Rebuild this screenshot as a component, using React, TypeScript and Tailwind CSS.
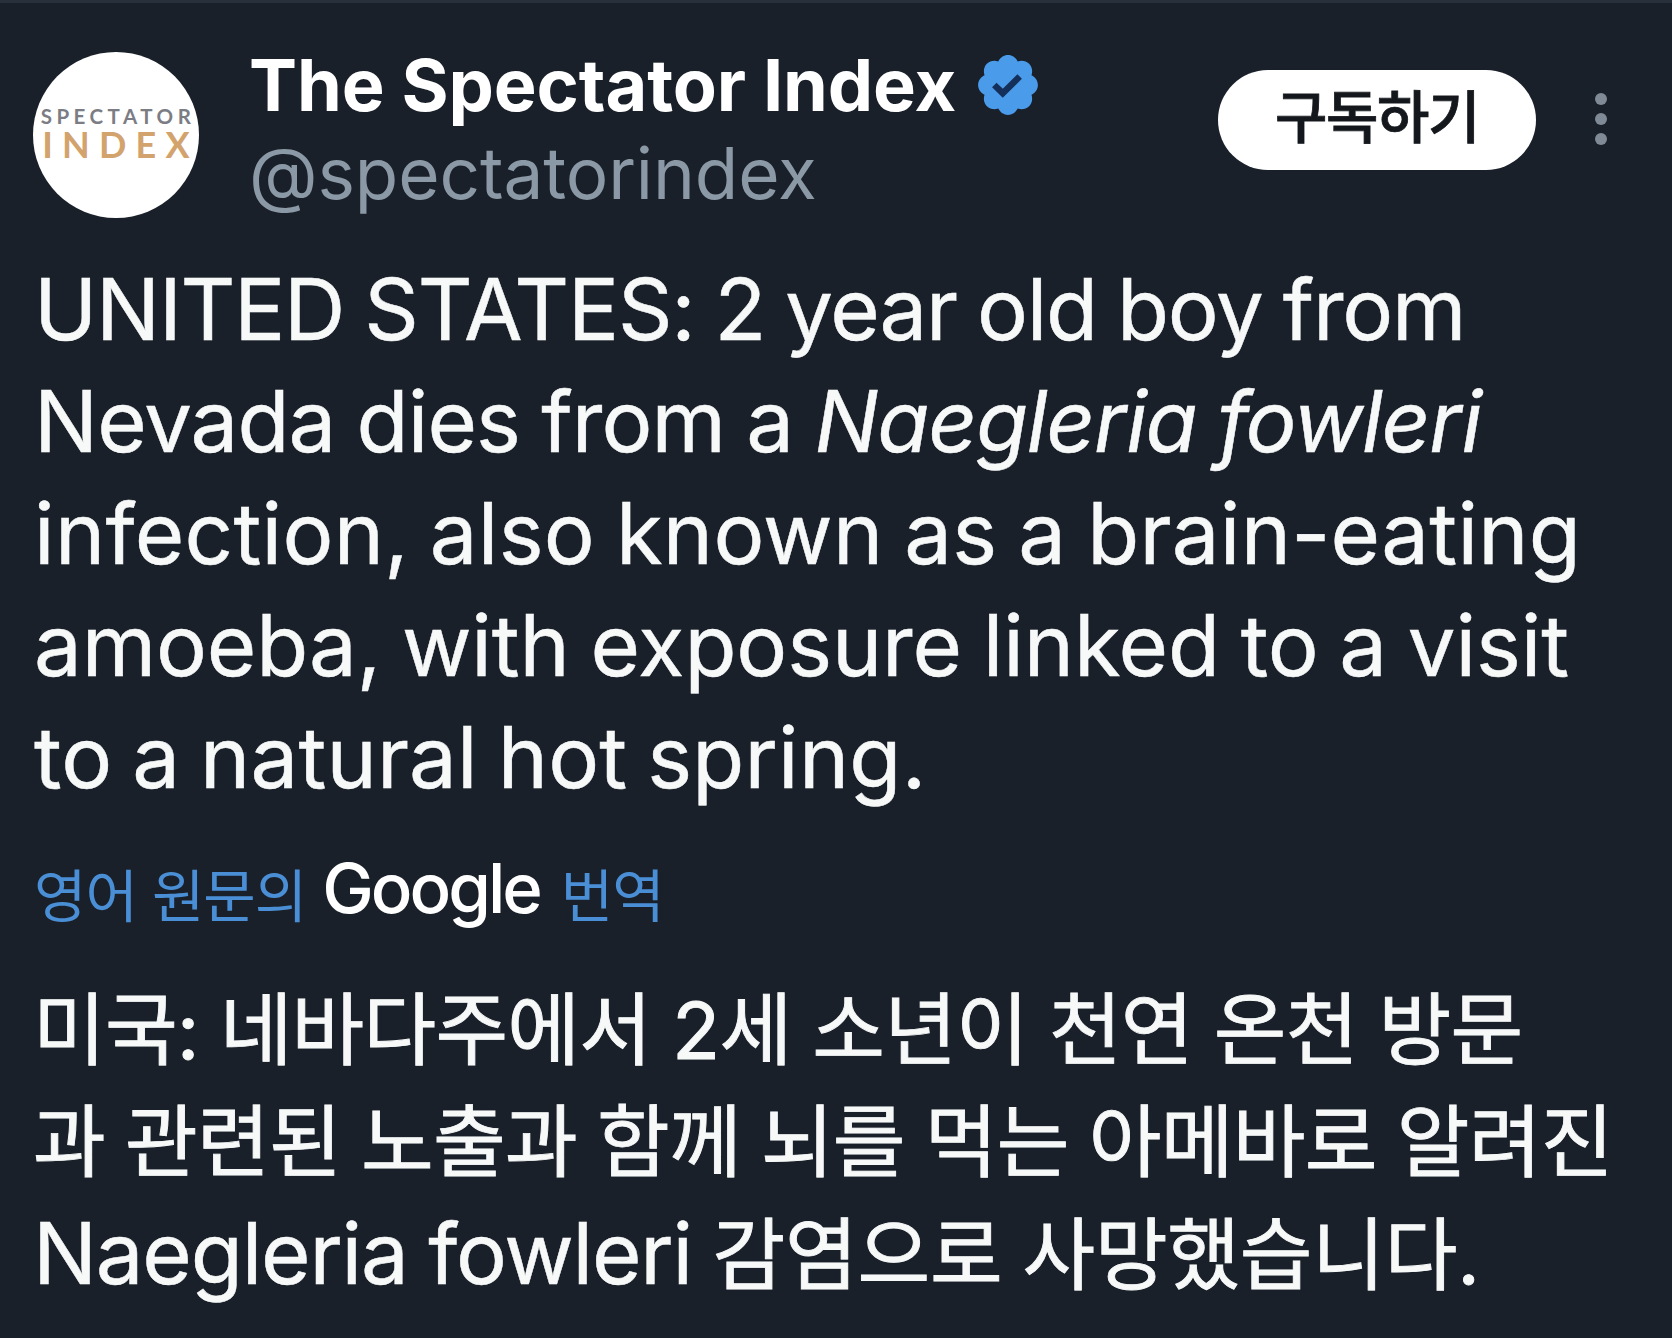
import React from "react";

function Avatar() {
  return (
    <div className="mt-[49px] flex h-[166px] w-[166px] shrink-0 flex-col items-center overflow-hidden rounded-full bg-white pt-[52px] font-['Lato',sans-serif]">
      <span className="-mr-[4px] whitespace-nowrap text-[20.5px] font-bold leading-[24px] tracking-[4.5px] text-[#7c7d84]">
        SPECTATOR
      </span>
      <span className="-mr-[9px] whitespace-nowrap text-[36px] font-bold leading-[33px] tracking-[9.2px] text-[#d3a36d]">
        INDEX
      </span>
    </div>
  );
}

function VerifiedBadge() {
  return (
    <svg viewBox="0 0 24 24" className="h-[70px] w-[70px] shrink-0" aria-hidden="true">
      <path
        fill="#4a9bea"
        d="M22.25 12c0-1.43-.88-2.67-2.19-3.34.46-1.39.2-2.9-.81-3.91s-2.52-1.27-3.91-.81c-.66-1.31-1.91-2.19-3.34-2.19s-2.67.88-3.33 2.19c-1.4-.46-2.91-.2-3.92.81s-1.26 2.52-.8 3.91c-1.31.67-2.2 1.91-2.2 3.34s.89 2.67 2.2 3.34c-.46 1.39-.21 2.9.8 3.91s2.52 1.26 3.91.81c.67 1.31 1.91 2.19 3.34 2.19s2.68-.88 3.34-2.19c1.39.45 2.9.2 3.91-.81s1.27-2.52.81-3.91c1.31-.67 2.19-1.91 2.19-3.34z"
      />
      <path d="M7.3 12 10.2 14.8 16 9.1" fill="none" stroke="#14305a" strokeWidth="2.2" />
    </svg>
  );
}

function Header() {
  return (
    <header className="flex h-[251px] items-start pl-[33px]">
      <Avatar />
      <div className="ml-[50px] flex flex-col pt-[38px]">
        <div className="flex h-[88px] items-center">
          <h1 className="whitespace-nowrap text-[72px] font-bold leading-[88px] tracking-[-0.1px] text-white">
            The Spectator Index
          </h1>
          <span className="ml-[17px]">
            <VerifiedBadge />
          </span>
        </div>
        <p className="mt-[2px] whitespace-nowrap text-[71px] leading-[84px] tracking-[-0.1px] text-[#8b98a5]">@spectatorindex</p>
      </div>
      <button className="ml-auto mt-[67px] flex h-[100px] w-[318px] items-center justify-center rounded-full bg-white text-[57px] font-medium leading-none tracking-[-1.4px] text-[#14181d] [-webkit-text-stroke:0.8px_#14181d]">
        <span className="-mt-[5px]">구독하기</span>
      </button>
      <div className="ml-[59px] mr-[65px] mt-[90px] flex w-[12px] flex-col gap-[8px]">
        <i className="h-[12px] w-[12px] rounded-full bg-[#7f8a96]" />
        <i className="h-[12px] w-[12px] rounded-full bg-[#7f8a96]" />
        <i className="h-[12px] w-[12px] rounded-full bg-[#7f8a96]" />
      </div>
    </header>
  );
}

export default function App() {
  return (
    <main className="h-[1338px] w-[1672px] overflow-hidden border-t-[3px] border-[#27303b] bg-[#1a2029] font-['Inter','Noto_Sans_CJK_KR',sans-serif] text-[#f7f9f9]">
      <Header />
      <section className="h-[559px] whitespace-pre pl-[34px] text-[85px] leading-[112px] [-webkit-text-stroke:0.5px_#f7f9f9]">
        <p className="tracking-[-1.2px] [word-spacing:-2.6px]">UNITED STATES: 2 year old boy from</p>
        <p className="tracking-[-0.9px] [word-spacing:-1.8px]">
          Nevada dies from a <em className="tracking-[-1.2px]">Naegleria fowleri</em>
        </p>
        <p className="tracking-[0.3px] [word-spacing:-3.4px]">infection, also known as a brain-eating</p>
        <p className="tracking-[-0.1px] [word-spacing:-3px]">amoeba, with exposure linked to a visit</p>
        <p className="tracking-[0.2px] [word-spacing:-4.2px]">to a natural hot spring.</p>
      </section>
      <section className="mt-[20px] flex h-[110px] items-baseline whitespace-pre pl-[34px] text-[57px] leading-[110px] text-[#4a8fd6]">
        <span className="relative top-[4px] tracking-[-1px]">영어 원문의</span>
        <span className="ml-[16px] text-[69px] font-medium tracking-[-3px] text-white">Google</span>
        <span className="relative top-[4px] ml-[21px] tracking-[-1px]">번역</span>
      </section>
      <section className="mt-[31px] whitespace-pre pl-[33px] text-[79px] leading-[112px] [-webkit-text-stroke:0.9px_#f7f9f9]">
        <p className="tracking-[-0.8px] [word-spacing:-0.4px]">미국: 네바다주에서 2세 소년이 천연 온천 방문</p>
        <p className="tracking-[-0.7px] [word-spacing:-1.5px]">과 관련된 노출과 함께 뇌를 먹는 아메바로 알려진</p>
        <p className="[word-spacing:-2px]">
          <span className="text-[85px] tracking-[-1.2px] [-webkit-text-stroke:0.5px_#f7f9f9]">Naegleria fowleri </span>
          <span className="tracking-[-0.2px]">감염으로 사망했습니다.</span>
        </p>
      </section>
    </main>
  );
}
